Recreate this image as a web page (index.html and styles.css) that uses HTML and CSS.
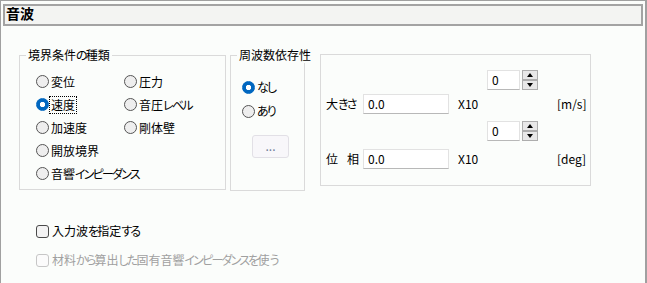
FILE: index.html
```html
<!DOCTYPE html>
<html lang="ja">
<head>
<meta charset="utf-8">
<link rel="stylesheet" href="styles.css">
</head>
<body>
<div class="frame">
  <div class="header">音波</div>
  <div class="groups">
    <fieldset class="grp grp-bc">
      <legend>境界条件<span class="k">の</span>種類</legend>
      <div class="radio-grid">
        <div class="opt"><span class="radio"></span><span class="txt">変位</span></div>
        <div class="opt"><span class="radio"></span><span class="txt">圧力</span></div>
        <div class="opt"><span class="radio on"></span><span class="txt focus">速度</span></div>
        <div class="opt"><span class="radio"></span><span class="txt">音圧<span class="k">レベル</span></span></div>
        <div class="opt"><span class="radio"></span><span class="txt">加速度</span></div>
        <div class="opt"><span class="radio"></span><span class="txt">剛体壁</span></div>
        <div class="opt full"><span class="radio"></span><span class="txt">開放境界</span></div>
        <div class="opt full"><span class="radio"></span><span class="txt">音響<span class="k">インピーダンス</span></span></div>
      </div>
    </fieldset>
    <fieldset class="grp grp-freq">
      <legend>周波数依存性</legend>
      <div class="freq-inner">
        <div class="opt row24"><span class="radio on"></span><span class="txt k">なし</span></div>
        <div class="opt row24"><span class="radio"></span><span class="txt k">あり</span></div>
        <div class="dots-btn">...</div>
      </div>
    </fieldset>
    <div class="grp grp-params">
      <div class="params">
        <div class="spin r1">
          <div class="spin-input">0</div>
          <div class="spin-btns"><span class="sb up"></span><span class="sb down"></span></div>
        </div>
        <div class="lbl r2">大<span class="k">きさ</span></div>
        <div class="tbox r2">0.0</div>
        <div class="x10 r2">X10</div>
        <div class="unit r2">[m/s]</div>
        <div class="spin r3">
          <div class="spin-input">0</div>
          <div class="spin-btns"><span class="sb up"></span><span class="sb down"></span></div>
        </div>
        <div class="lbl r4">位<span class="gap"></span>相</div>
        <div class="tbox r4">0.0</div>
        <div class="x10 r4">X10</div>
        <div class="unit r4">[deg]</div>
      </div>
    </div>
  </div>
  <div class="checks">
    <div class="chk"><span class="box"></span><span class="txt">入力波<span class="k">を</span>指定<span class="k">する</span></span></div>
    <div class="chk disabled"><span class="box"></span><span class="txt">材料<span class="k">から</span>算出<span class="k">した</span>固有音響<span class="k">インピーダンスを</span>使<span class="k">う</span></span></div>
  </div>
</div>
</body>
</html>
```

FILE: styles.css
```css
* { box-sizing: border-box; }

body {
  margin: 0;
  font-family: "Noto Sans CJK JP", "Noto Sans", sans-serif;
  font-size: 12px;
  font-feature-settings: "palt";
  color: #000;
  background: #fbfdfb;
}

.k { letter-spacing: -1.8px; }

.frame {
  width: 647px;
  height: 283px;
  border: 1px solid #a0a0a0;
  border-bottom: none;
  border-right-width: 2px;
  background: #fbfdfb;
  overflow: hidden;
}

.header {
  margin: 3px 2px 0 2px;
  height: 22px;
  border: 2px solid #a3a3a3;
  background: #f3f4f2;
  font-weight: bold;
  font-size: 14px;
  line-height: 15px;
  padding-left: 1px;
}

.groups {
  display: flex;
  align-items: flex-start;
  margin-top: 21px;
  padding-left: 18px;
  height: 144px;
}

.grp {
  margin: 0;
  padding: 0;
  border: 1px solid #dadada;
  min-width: 0;
}

.grp legend {
  margin-left: 6px;
  padding: 0 2px;
  line-height: 16px;
  white-space: nowrap;
}

.grp-bc { width: 207px; }

.radio-grid {
  display: grid;
  grid-template-columns: 88px 1fr;
  grid-auto-rows: 23px;
  padding: 7px 0 4px 16px;
}

.opt {
  display: flex;
  align-items: center;
  white-space: nowrap;
}

.opt.full { grid-column: 1 / 3; }

.radio {
  width: 13px;
  height: 13px;
  border-radius: 50%;
  border: 1px solid #555;
  background: #eeeeee;
  flex: none;
  margin-right: 2px;
}

.radio.on {
  border-color: #0067c0;
  background: radial-gradient(circle, #ffffff 0 2.3px, #0067c0 3px);
}

.txt { line-height: 16px; }

.focus {
  outline: 1px dotted #000;
  outline-offset: 0;
  padding: 0 1px;
  margin-left: -1px;
}

.grp-freq {
  width: 75px;
  margin-left: 4px;
}

.freq-inner {
  padding: 12px 0 32px 11px;
}

.row24 { height: 24px; }

.dots-btn {
  margin: 12px 0 0 10px;
  width: 37px;
  height: 23px;
  border: 1px solid #e2e0e6;
  border-radius: 3px;
  background: #f8f7fa;
  color: #6f7d99;
  text-align: center;
  line-height: 20px;
  font-size: 12px;
}

.grp-params {
  width: 271px;
  margin-left: 15px;
  margin-top: 7px;
}

.params {
  display: grid;
  grid-template-columns: 37px 86px 38px 51px auto;
  grid-template-rows: 24px 27px 28px 20px;
  padding: 15px 0 16px 5px;
}

.r1 { grid-row: 1; }
.r2 { grid-row: 2; }
.r3 { grid-row: 3; }
.r4 { grid-row: 4; }

.spin {
  grid-column: 4;
  display: flex;
  height: 20px;
}

.spin-input {
  width: 33px;
  height: 20px;
  background: #fff;
  border: 1px solid #e2e2e2;
  border-bottom-color: #b8b8b8;
  padding-left: 4px;
  line-height: 18px;
}

.spin-btns {
  margin-left: 2px;
  width: 16px;
  display: flex;
  flex-direction: column;
}

.sb {
  height: 10px;
  border: 1px solid #adadad;
  background: #e8e8e8;
  display: flex;
  align-items: center;
  justify-content: center;
}

.sb.up::after {
  content: "";
  border-left: 3.5px solid transparent;
  border-right: 3.5px solid transparent;
  border-bottom: 4px solid #000;
}

.sb.down::after {
  content: "";
  border-left: 3.5px solid transparent;
  border-right: 3.5px solid transparent;
  border-top: 4px solid #000;
}

.lbl {
  grid-column: 1;
  line-height: 20px;
  white-space: nowrap;
}

.lbl .gap {
  display: inline-block;
  width: 9px;
}

.tbox {
  grid-column: 2;
  height: 20px;
  background: #fff;
  border: 1px solid #e2e2e2;
  border-bottom-color: #b8b8b8;
  padding-left: 4px;
  line-height: 18px;
}

.x10 {
  grid-column: 3;
  padding-left: 9px;
  line-height: 20px;
}

.unit {
  grid-column: 5;
  padding-left: 19px;
  line-height: 20px;
  white-space: nowrap;
}

.checks {
  margin-top: 30px;
  padding-left: 35px;
  display: flex;
  flex-direction: column;
  gap: 9px;
}

.chk {
  display: flex;
  align-items: center;
  height: 20px;
  white-space: nowrap;
}

.chk .box {
  width: 13px;
  height: 13px;
  border: 1px solid #4a4a4a;
  border-radius: 3px;
  background: #f3f3f3;
  margin-right: 3px;
  flex: none;
}

.chk.disabled .box {
  border-color: #c6c6c6;
  background: #fbfbfb;
}

.chk.disabled .txt { color: #a0a0a0; }
```
